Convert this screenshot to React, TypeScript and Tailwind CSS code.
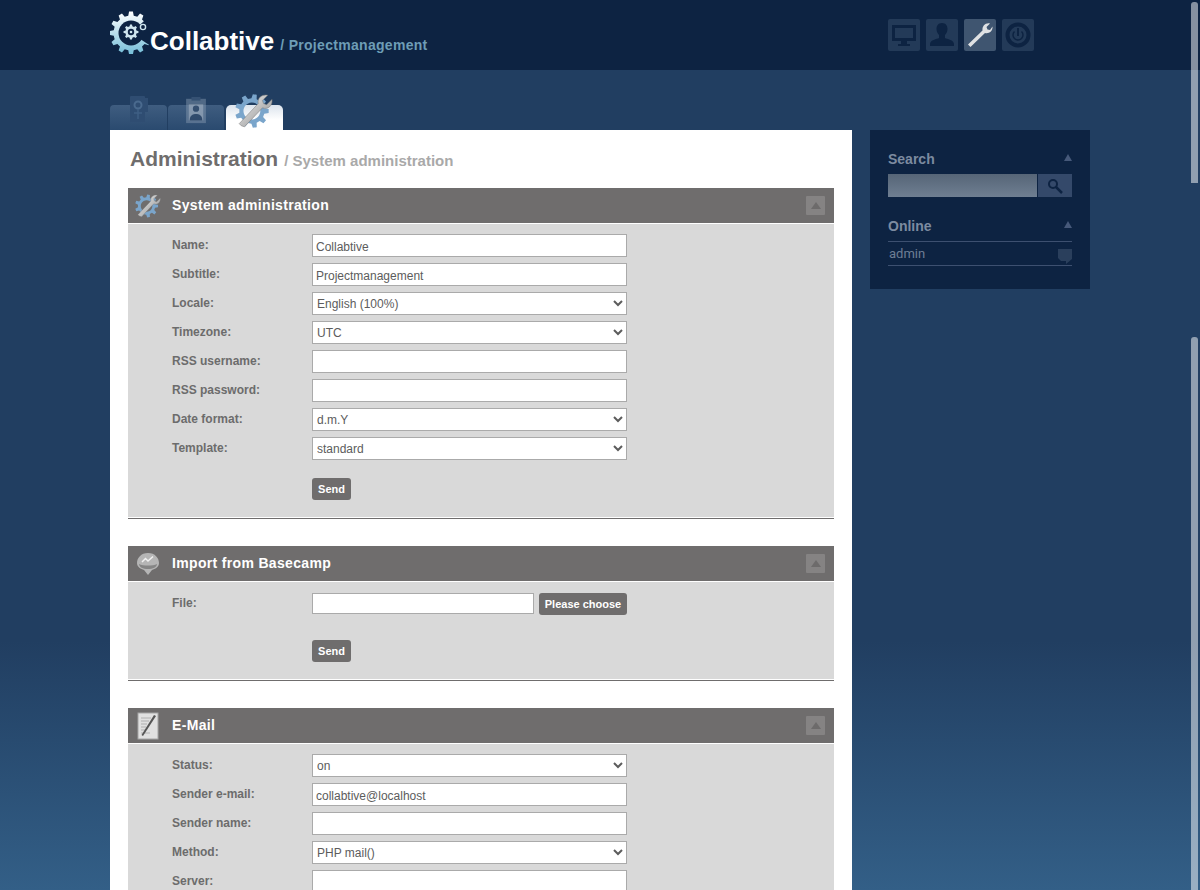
import React from "react";

const sans = "font-['Liberation_Sans',Arial,sans-serif]";

// builds a cog outline, teeth evenly spaced round the centre
function gearPath(cx: number, cy: number, outer: number, inner: number, teeth: number) {
  const pts: string[] = [];
  const step = (Math.PI * 2) / teeth;
  for (let i = 0; i < teeth; i++) {
    const a = i * step;
    const corners: [number, number][] = [
      [inner, a - step * 0.3],
      [outer, a - step * 0.17],
      [outer, a + step * 0.17],
      [inner, a + step * 0.3],
    ];
    corners.forEach(([r, t]) => {
      pts.push(`${(cx + r * Math.cos(t)).toFixed(2)} ${(cy + r * Math.sin(t)).toFixed(2)}`);
    });
  }
  return "M" + pts.join("L") + "Z";
}

function Logo() {
  return (
    <svg width="42" height="44" viewBox="0 0 42 44" className="shrink-0">
      <defs>
        <linearGradient id="logoG" x1="0" y1="0" x2="0" y2="1">
          <stop offset="0" stopColor="#ffffff" />
          <stop offset="1" stopColor="#74bdd8" />
        </linearGradient>
        <mask id="logoM">
          <rect width="42" height="44" fill="white" />
          <circle cx="21" cy="23" r="12.500" fill="black" />
          <path d="M21 23 L44 2 L44 38 Z" fill="black" />
        </mask>
      </defs>
      <path d={gearPath(21, 23, 21.5, 17.5, 12)} fill="url(#logoG)" mask="url(#logoM)" />
      <path d={gearPath(21, 22, 7.5, 5.8, 8)} fill="#cfe5ee" />
      <circle cx="21" cy="22" r="3.200" fill="#0d2342" />
      <circle cx="21" cy="22" r="1.300" fill="#cfe5ee" />
      <circle cx="33" cy="17" r="2.600" fill="none" stroke="#cfe5ee" strokeWidth="1.400" />
    </svg>
  );
}

function WrenchGear({ size, id }: { size: number; id: string }) {
  return (
    <svg width={size} height={size} viewBox="0 0 36 36" className="shrink-0">
      <defs>
        <linearGradient id={id} x1="0" y1="0" x2="1" y2="1">
          <stop offset="0" stopColor="#f2f2f2" />
          <stop offset="1" stopColor="#8c8c8c" />
        </linearGradient>
      </defs>
      <path
        fillRule="evenodd"
        d={gearPath(16, 18, 16, 12, 9) + "M16 10a8 8 0 1 0 .01 0Z"}
        fill="#7aa5cb"
      />
      <path
        d="M6 32 L4 30 L22 11 C21 6 25 2 31 3 L26 8 L27 11 L30 12 L35 7 C36 13 31 17 26 15 L9 33 Z"
        fill={`url(#${id})`}
        stroke="#777"
        strokeWidth="0.5"
      />
    </svg>
  );
}

function BasecampIcon() {
  return (
    <svg width="26" height="26" viewBox="0 0 26 26" className="shrink-0">
      <path d="M13 2 C20 2 24 7 24 12 C24 16 20 18 17 19 L13 24 L9 19 C6 18 2 16 2 12 C2 7 6 2 13 2Z" fill="#b5b5b5" />
      <path d="M4 13 C8 15 18 15 22 13 C22 16 18 18 13 18 C8 18 4 16 4 13Z" fill="#858585" />
      <path d="M7 11 L10.500 7.500 L13 10 L18 5.500" fill="none" stroke="#f1f1f1" strokeWidth="1.500" />
    </svg>
  );
}

function NoteIcon() {
  return (
    <svg width="24" height="28" viewBox="0 0 24 28" className="shrink-0">
      <rect x="2" y="1" width="20" height="26" fill="#e0e0e0" stroke="#a5a5a5" />
      <path d="M5 6h10M5 9h8M5 12h6M5 15h5M5 18h5M5 21h9" stroke="#b0b0b0" strokeWidth="1" />
      <path d="M20 4 L7 24 L5.500 23 L18 3Z" fill="#555" />
    </svg>
  );
}

function CollapseButton() {
  return (
    <span className="flex h-[19px] w-[19px] items-center justify-center rounded-[1px] bg-[#858383]">
      <span className="h-0 w-0 border-x-[5px] border-b-[7px] border-x-transparent border-b-[#6d6b6b]" />
    </span>
  );
}

function Section({ title, icon, children }: { title: string; icon: React.ReactNode; children: React.ReactNode }) {
  return (
    <section>
      <div className="flex h-[35px] items-center bg-[#6f6d6d] pr-[9px]">
        <span className="flex w-[44px] shrink-0 items-center justify-center pr-[4px]">{icon}</span>
        <h2 className="flex-1 text-[14px] font-bold tracking-[0.33px] text-white">{title}</h2>
        <CollapseButton />
      </div>
      <div className="mt-[1px] bg-[#d9d9d9] pl-[44px] pt-[10px]">{children}</div>
      <div className="mt-[1px] h-px bg-[#6f6d6d]" />
    </section>
  );
}

function Row({ label, tight, children }: { label: string; tight?: boolean; children: React.ReactNode }) {
  return (
    <div className="mb-[6px] flex h-[23px] items-start">
      <label className={`w-[140px] shrink-0 text-[12px] font-bold leading-[16px] text-[#6c6c6c] ${tight ? "pt-[2px]" : "pt-[3px]"}`}>{label}</label>
      {children}
    </div>
  );
}

const field = "h-[23px] w-[315px] border border-[#aaaaaa] bg-white text-[12px] text-[#5c5c5c] outline-none";

function Text({ value = "" }: { value?: string }) {
  return <input readOnly value={value} className={`${field} px-[3px] pt-[2px] ${sans}`} />;
}

function Select({ value }: { value: string }) {
  return (
    <select defaultValue={value} className={`${field} ${sans}`}>
      <option>{value}</option>
    </select>
  );
}

function Send() {
  return (
    <div className="ml-[140px] flex">
      <button className="h-[22px] w-[39px] rounded-[3px] bg-[#6f6d6d] text-[11px] font-bold text-white">Send</button>
    </div>
  );
}

function TopButton({ active, children }: { active?: boolean; children: React.ReactNode }) {
  return (
    <span className={`flex h-[32px] w-[32px] items-center justify-center rounded-[2px] ${active ? "bg-[#3f5570]" : "bg-[#233a58]"}`}>
      {children}
    </span>
  );
}

function SideHead({ title }: { title: string }) {
  return (
    <div className="flex items-center justify-between">
      <h3 className="text-[14px] font-bold text-[#7c8ba0]">{title}</h3>
      <span className="mb-[4px] h-0 w-0 border-x-[4.500px] border-b-[7px] border-x-transparent border-b-[#46597a]" />
    </div>
  );
}

export default function App() {
  return (
    <div className={`relative h-[890px] overflow-hidden bg-gradient-to-b from-[#213e61] from-[72%] to-[#335f87] ${sans}`}>
      {/* Header */}
      <header className="h-[70px] bg-[#0d2342]">
        <div className="flex h-full pl-[110px] pr-[166px]">
          <div className="flex flex-1 items-start pt-[10px]">
            <Logo />
            <span className="-ml-[2px] mt-[14px] text-[26px] font-bold leading-[34px] text-white">Collabtive</span>
            <span className="ml-[6px] mt-[26px] text-[14px] font-bold leading-[18px] tracking-[0.3px] text-[#6d9db6]">/ Projectmanagement</span>
          </div>
          <nav className="flex gap-[6px] pt-[19px]">
            <TopButton>
              <svg width="26" height="26" viewBox="0 0 26 26" fill="#0d2342">
                <path fillRule="evenodd" d="M1 3h24v16H1ZM4 6v10h18V6Z" />
                <path d="M10 19h6v3h3v2H7v-2h3Z" />
              </svg>
            </TopButton>
            <TopButton>
              <svg width="26" height="26" viewBox="0 0 26 26" fill="#0d2342">
                <path d="M13 1c4 0 5.500 3 5.500 6 0 3-1.500 5-2.500 6v3c2 1 9 2 9 6v2H1v-2c0-4 7-5 9-6v-3C9 12 7.500 10 7.500 7c0-3 1.500-6 5.500-6Z" />
              </svg>
            </TopButton>
            <TopButton active>
              <svg width="26" height="26" viewBox="0 0 26 26" fill="#dfe1e3">
                <path d="M3.500 25 L1 22.500 L15.500 8.500 C15 4 18.500 0.500 23 1.500 L19.500 5 L20.500 7.500 L23 8 L25.500 4.500 C26 9.500 21.500 12 18 11 L3.500 25Z" />
              </svg>
            </TopButton>
            <TopButton>
              <svg width="26" height="26" viewBox="0 0 26 26" fill="none" stroke="#0d2342">
                <circle cx="13" cy="13" r="10.500" strokeWidth="4" />
                <path d="M9.500 9.500a5 5 0 1 0 7 0" strokeWidth="1.500" />
                <path d="M13 6v8" strokeWidth="2" />
              </svg>
            </TopButton>
          </nav>
        </div>
      </header>

      <div className="flex pl-[110px] pt-[35px]">
        {/* Main column */}
        <div className="w-[742px] shrink-0">
          <div className="flex h-[25px] items-end gap-px">
            <div className="relative h-[25px] w-[57px] rounded-t-[4px] bg-gradient-to-b from-[#3f5d80] to-[#2a4a6f]">
              <svg width="24" height="28" viewBox="0 0 24 28" className="absolute -top-[9px] left-[18px]">
                <rect x="2" y="0" width="15" height="26" rx="1" fill="#2f4d72" />
                <circle cx="10" cy="9" r="3.500" fill="none" stroke="#4a6a8e" strokeWidth="2" />
                <path d="M10 13v10M6 17h8" stroke="#3f5f84" strokeWidth="1.500" />
                <rect x="17" y="2" width="3" height="14" fill="#2f4d72" />
              </svg>
            </div>
            <div className="relative h-[25px] w-[56px] rounded-t-[4px] bg-gradient-to-b from-[#3f5d80] to-[#2a4a6f]">
              <svg width="24" height="27" viewBox="0 0 24 30" className="absolute -top-[8px] left-[16px] opacity-45">
                <rect x="1" y="2" width="22" height="27" fill="#8a9db3" />
                <rect x="7" y="0" width="10" height="4" fill="#4f6a8a" />
                <rect x="4" y="8" width="16" height="18" fill="#dfe5ec" />
                <circle cx="12" cy="13" r="3.500" fill="#2d4260" />
                <path d="M5 26c0-6 4-7 7-7s7 1 7 7Z" fill="#2d4260" />
              </svg>
            </div>
            <div className="relative ml-px h-[25px] w-[57px] rounded-t-[5px] bg-gradient-to-b from-[#dfe6ee] from-[5%] to-white to-[60%]">
              <span className="absolute -top-[13px] left-[9px]">
                <WrenchGear size={38} id="tabW" />
              </span>
            </div>
          </div>

          <main className="bg-white px-[18px] pb-[28px]">
            <div className="flex items-baseline pb-[15px] pl-[2px] pt-[14px]">
              <h1 className="text-[21px] font-bold leading-[29px] text-[#6f6d6d]">Administration</h1>
              <span className="ml-[6px] text-[15px] font-bold text-[#a9a9a9]">/ System administration</span>
            </div>

            <Section title="System administration" icon={<WrenchGear size={26} id="headW" />}>
              <Row label="Name:"><Text value="Collabtive" /></Row>
              <Row label="Subtitle:"><Text value="Projectmanagement" /></Row>
              <Row label="Locale:"><Select value="English (100%)" /></Row>
              <Row label="Timezone:"><Select value="UTC" /></Row>
              <Row label="RSS username:"><Text /></Row>
              <Row label="RSS password:"><Text /></Row>
              <Row label="Date format:"><Select value="d.m.Y" /></Row>
              <Row label="Template:"><Select value="standard" /></Row>
              <div className="h-[12px]" />
              <Send />
              <div className="h-[17px]" />
            </Section>

            <div className="h-[27px]" />

            <Section title="Import from Basecamp" icon={<BasecampIcon />}>
              <div className="h-px" />
              <Row label="File:" tight>
                <input readOnly className={`h-[21px] w-[222px] border border-[#aaaaaa] bg-white ${sans}`} />
                <button className="ml-[5px] h-[22px] w-[88px] rounded-[3px] bg-[#6f6d6d] text-[11px] font-bold text-white">Please choose</button>
              </Row>
              <div className="h-[18px]" />
              <Send />
              <div className="h-[17px]" />
            </Section>

            <div className="h-[27px]" />

            <Section title="E-Mail" icon={<NoteIcon />}>
              <Row label="Status:"><Select value="on" /></Row>
              <Row label="Sender e-mail:"><Text value="collabtive@localhost" /></Row>
              <Row label="Sender name:"><Text /></Row>
              <Row label="Method:"><Select value="PHP mail()" /></Row>
              <Row label="Server:"><Text /></Row>
            </Section>
          </main>
        </div>

        {/* Sidebar */}
        <aside className="ml-[18px] mt-[25px] h-[159px] w-[220px] bg-[#0d2342] px-[18px] pt-[19px]">
          <SideHead title="Search" />
          <div className="mt-[4px] flex h-[23px] gap-px">
            <div className="w-[149px] bg-gradient-to-b from-[#566577] to-[#6f7f92]" />
            <div className="flex flex-1 items-center justify-center bg-[#34496a]">
              <svg width="16" height="16" viewBox="0 0 16 16" fill="none" stroke="#0d2342">
                <circle cx="6" cy="6" r="4" strokeWidth="2" />
                <path d="M9 9l6 6" strokeWidth="2.500" />
              </svg>
            </div>
          </div>
          <div className="mt-[19px]">
            <SideHead title="Online" />
          </div>
          <div className="mt-[4px] flex h-[25px] items-center justify-between border-y border-[#3d5070] pl-px">
            <span className="text-[13px] text-[#6e7e95] font-['Roboto',sans-serif]">admin</span>
            <svg width="14" height="15" viewBox="0 0 14 15" fill="#2a3f5c" className="mt-[5px]">
              <path d="M0 0h14v10l-6 5v-3H3L0 9Z" />
            </svg>
          </div>
        </aside>
      </div>

      {/* Overlay scrollbars */}
      <div className="absolute right-[2px] top-[2px] h-[181px] w-[7px] rounded-t-[3px] bg-white/50" />
      <div className="absolute right-[2px] top-[337px] h-[560px] w-[7px] rounded-t-[3px] bg-white/50" />
    </div>
  );
}
